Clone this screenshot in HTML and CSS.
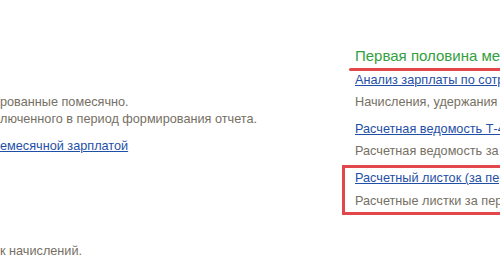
FILE: index.html
```html
<!DOCTYPE html>
<html lang="ru">
<head>
<meta charset="utf-8">
<link rel="stylesheet" href="styles.css">
</head>
<body>
<div class="page">
  <div class="left">
    <p class="desc">рованные помесячно.</p>
    <p class="desc">люченного в период формирования отчета.</p>
    <p class="link-line"><a href="#">емесячной зарплатой</a></p>
    <p class="desc last">к начислений.</p>
  </div>
  <div class="right">
    <div class="title">Первая половина месяца</div>
    <div class="mark-line"></div>
    <div class="item">
      <a href="#">Анализ зарплаты по сотрудникам</a>
      <p class="desc">Начисления, удержания и выплаты по сотрудникам</p>
    </div>
    <div class="item">
      <a href="#">Расчетная ведомость Т-49</a>
      <p class="desc">Расчетная ведомость за первую половину месяца</p>
    </div>
    <div class="item boxed">
      <a href="#">Расчетный листок (за первую половину месяца)</a>
      <p class="desc">Расчетные листки за первую половину месяца</p>
    </div>
  </div>
</div>
</body>
</html>
```
FILE: styles.css
```css
html, body {
  margin: 0;
  padding: 0;
  background: #ffffff;
}
body {
  width: 500px;
  height: 262px;
  overflow: hidden;
  font-family: "Liberation Sans", Arial, sans-serif;
  font-size: 12.7px;
  line-height: 17px;
}
.page {
  display: flex;
  width: 900px;
}
.left {
  flex: none;
  width: 342px;
  padding-top: 94px;
}
p {
  margin: 0;
  white-space: nowrap;
}
.desc {
  color: #767064;
}
a {
  color: #1f4fa6;
  text-decoration: underline;
  white-space: nowrap;
}
.link-line {
  margin-top: 10px;
}
.left .last {
  margin-top: 88px;
}
.right {
  flex: none;
  width: 500px;
  padding-top: 46px;
}
.title {
  margin-left: 13px;
  font-size: 15px;
  line-height: 20px;
  color: #33a040;
  white-space: nowrap;
}
.mark-line {
  margin: 2px 0 0 7px;
  height: 3px;
  background: #e2474c;
  border-radius: 2px 0 0 2px;
}
.item {
  padding-left: 13px;
  margin-top: 1px;
}
.item + .item {
  margin-top: 10px;
}
.item .desc {
  margin-top: 5px;
}
.item.boxed {
  margin-top: 5px;
  padding: 2px 0 2px 10px;
  border: 3px solid #e2474c;
  border-right: none;
}
.item.boxed .desc {
  margin-top: 6px;
}
```
